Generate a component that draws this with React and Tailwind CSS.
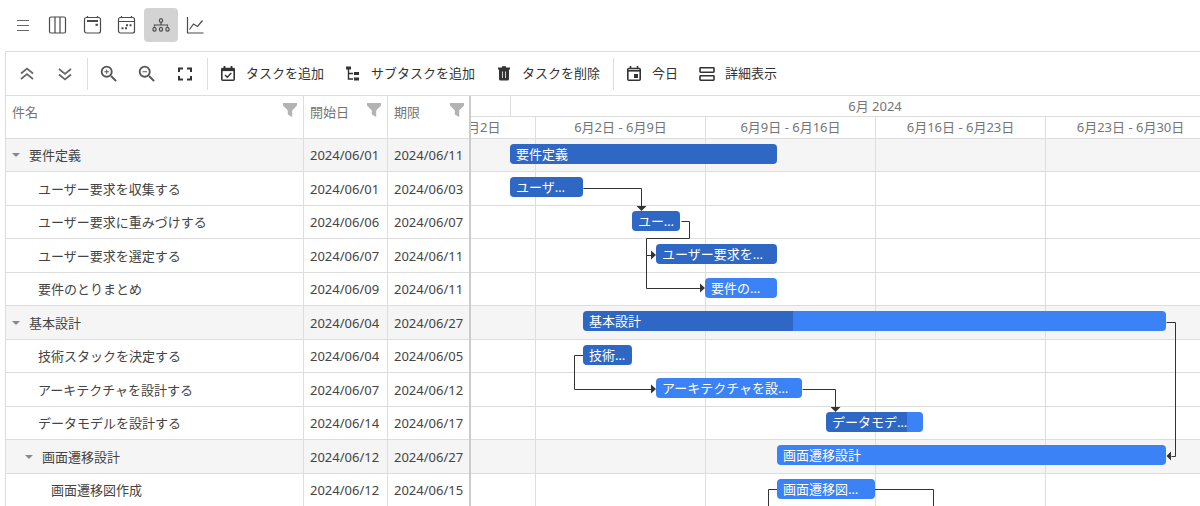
import clsx from 'clsx';
import { MdZoomIn, MdZoomOut } from 'react-icons/md';

const WEEK = 170;
const JUNE_2 = 64;

// x position of the start of a day in June on the timeline
const dayX = (day) => JUNE_2 + Math.floor(((day - 2) * WEEK) / 7);

const TASKS = [
  { title: '要件定義', level: 0, from: 1, to: 11, progress: 100, group: true },
  { title: 'ユーザー要求を収集する', level: 1, from: 1, to: 3, progress: 100 },
  { title: 'ユーザー要求に重みづけする', level: 1, from: 6, to: 7, progress: 100 },
  { title: 'ユーザー要求を選定する', level: 1, from: 7, to: 11, progress: 100 },
  { title: '要件のとりまとめ', level: 1, from: 9, to: 11, progress: 0 },
  { title: '基本設計', level: 0, from: 4, to: 27, progress: 36, group: true },
  { title: '技術スタックを決定する', level: 1, from: 4, to: 5, progress: 100 },
  { title: 'アーキテクチャを設計する', level: 1, from: 7, to: 12, progress: 0 },
  { title: 'データモデルを設計する', level: 1, from: 14, to: 17, progress: 83 },
  { title: '画面遷移設計', level: 1, from: 12, to: 27, progress: 0, group: true },
  { title: '画面遷移図作成', level: 2, from: 12, to: 15, progress: 0 },
];

const WEEKS = [
  '5月26日 - 6月2日',
  '6月2日 - 6月9日',
  '6月9日 - 6月16日',
  '6月16日 - 6月23日',
  '6月23日 - 6月30日',
];

const LINKS = [
  'M112 49H170V68',
  'M210 82H218V99H175V149H229',
  'M175 116H181',
  'M112 216H103V250H181',
  'M331 250H364V268',
  'M695 183H704V317H700',
  'M306 350H297V368',
  'M403 350H462V368',
];

const ARROWS = [
  'M165.5 67h10l-5 5z',
  'M180 111.5v9l5-4.5z',
  'M229 144.5v9l5-4.5z',
  'M180 245.5v9l5-4.5z',
  'M359.5 268h10l-5 5z',
  'M700 312.5v9l-4.5-4.5z',
];

const formatDate = (day) => `2024/06/${String(day).padStart(2, '0')}`;

function LineIcon({ children }) {
  return (
    <svg width="20" height="20" viewBox="0 0 20 20" fill="none" stroke="#4a4a4a" strokeWidth="1.2" aria-hidden="true">
      {children}
    </svg>
  );
}

function ToolIcon({ children }) {
  return (
    <svg width="16" height="16" viewBox="0 0 16 16" fill="none" stroke="#333" strokeWidth="1.6" aria-hidden="true">
      {children}
    </svg>
  );
}

const VIEWS = [
  { label: 'リスト', icon: <path d="M4 5.5h12M4 10.5h12M4 15.5h12" stroke="#666" /> },
  {
    label: 'ボード',
    icon: <><rect x="2.5" y="2" width="16" height="16" rx="1.5" /><path d="M8 2v16M13 2v16" /></>,
  },
  {
    label: 'カレンダー',
    icon: (
      <>
        <rect x="2.5" y="2.5" width="16" height="15.5" rx="2" />
        <path d="M5.5 1v1.5M15.5 1v1.5" />
        <path d="M5 6h11" strokeWidth="2" />
        <path d="M13.5 9.8h2.5" strokeWidth="2" />
      </>
    ),
  },
  {
    label: 'スケジュール',
    icon: (
      <>
        <rect x="2.5" y="2.5" width="16" height="15.5" rx="2" />
        <path d="M5.5 1v2M15.5 1v2M2.5 6.5h16" />
        <path d="M10 10.2h2M13.5 10.2h2M5.5 13.3h2M9 13.3h2" strokeWidth="2" />
      </>
    ),
  },
  {
    label: 'ガント',
    active: true,
    icon: (
      <>
        <ellipse cx="10" cy="5.5" rx="1.6" ry="1.9" />
        <path d="M10 7.4v2.8M3.5 11.6v-1.6h13v1.6" />
        <ellipse cx="3.5" cy="14.2" rx="1.6" ry="1.9" />
        <ellipse cx="10" cy="14.2" rx="1.6" ry="1.9" />
        <ellipse cx="16.5" cy="14.2" rx="1.6" ry="1.9" />
      </>
    ),
  },
  { label: 'チャート', icon: <path d="M2.5 2v16h16M4.5 14.5l4-5.5 4 2.5 5-6" /> },
];

const ICONS = {
  collapse: <path d="M2 7.5L8 2.5l6 5M2 13L8 8l6 5" stroke="#666" strokeWidth="1.7" />,
  expand: <path d="M2 3l6 5 6-5M2 8.5l6 5 6-5" stroke="#666" strokeWidth="1.7" />,
  fit: <path d="M2 6V2.5h4M10 2.5h4V6M14 10v3.5h-4M6 13.5H2V10" strokeWidth="2" />,
  add: (
    <>
      <rect x="1.8" y="2.5" width="12.4" height="11.7" rx="1" />
      <path d="M1.5 3.6h13" strokeWidth="3" />
      <path d="M4.5 0v3M11.5 0v3" strokeWidth="1.8" />
      <path d="M5 9l2.3 2.2L11.3 7" strokeWidth="1.4" />
    </>
  ),
  subtask: (
    <>
      <path d="M1 2h5M9 7.5h5M9 13h5" strokeWidth="3" />
      <path d="M3.5 3v10H8M3.5 7.5H8" strokeWidth="1.4" />
    </>
  ),
  remove: (
    <>
      <path d="M2 2.6h12M6 1.2h4" strokeWidth="2" />
      <path d="M3 3h10v10a1.5 1.5 0 0 1-1.5 1.5h-7A1.5 1.5 0 0 1 3 13z" fill="#333" stroke="none" />
      <path d="M6.5 5.5v6.5M9.5 5.5v6.5" stroke="#ccc" strokeWidth="1" />
    </>
  ),
  today: (
    <>
      <rect x="1.8" y="2.5" width="12.4" height="11.7" rx="1" />
      <path d="M1.8 4.8h12.4" />
      <path d="M4.5 0v3M11.5 0v3" />
      <path d="M8 8h4v4H8z" fill="#333" stroke="none" />
    </>
  ),
  detail: (
    <>
      <rect x="1" y="1.8" width="14" height="4.4" rx="0.6" />
      <rect x="1" y="9.8" width="14" height="4.4" rx="0.6" />
    </>
  ),
};

function IconButton({ label, children }) {
  return (
    <button type="button" aria-label={label} className="flex h-9 w-[38px] items-center justify-center text-[#555]">
      {children}
    </button>
  );
}

function TextButton({ icon, children }) {
  return (
    <button type="button" className="flex h-9 items-center gap-[10px] px-[10px] whitespace-nowrap text-[#333]">
      <ToolIcon>{ICONS[icon]}</ToolIcon>
      {children}
    </button>
  );
}

function Separator() {
  return <div className="mr-[2px] ml-[3px] h-8 w-px bg-[#ddd]" />;
}

function Toolbar() {
  return (
    <div className="flex h-11 shrink-0 items-center border-b border-[#ddd] pl-[2px]">
      <IconButton label="すべて折りたたむ"><ToolIcon>{ICONS.collapse}</ToolIcon></IconButton>
      <IconButton label="すべて展開"><ToolIcon>{ICONS.expand}</ToolIcon></IconButton>
      <Separator />
      <IconButton label="拡大"><MdZoomIn size={22} /></IconButton>
      <IconButton label="縮小"><MdZoomOut size={22} /></IconButton>
      <IconButton label="全体表示"><ToolIcon>{ICONS.fit}</ToolIcon></IconButton>
      <Separator />
      <div className="flex gap-px">
        <TextButton icon="add">タスクを追加</TextButton>
        <TextButton icon="subtask">サブタスクを追加</TextButton>
        <TextButton icon="remove">タスクを削除</TextButton>
      </div>
      <Separator />
      <div className="flex gap-px">
        <TextButton icon="today">今日</TextButton>
        <TextButton icon="detail">詳細表示</TextButton>
      </div>
    </div>
  );
}

function HeaderCell({ className, children }) {
  return (
    <th scope="col" className={clsx('h-[43px] border-b border-[#ddd] pl-[6px] text-left font-normal text-[#757575]', className)}>
      <div className="flex h-8 items-start justify-between">
        <span className="leading-[22px]">{children}</span>
        <button type="button" aria-label={`${children}で絞り込む`} className="pt-[2px]">
          <svg width="14" height="14" viewBox="0 0 14 14" fill="#b3b3b3" aria-hidden="true">
            <path d="M0 0h14v2.5L9.2 7.5V14l-4.4-2.5v-4L0 2.5z" />
          </svg>
        </button>
      </div>
    </th>
  );
}

function TaskTable() {
  return (
    <table className="w-[463px] shrink-0 table-fixed border-separate border-spacing-0 self-start">
      <thead>
        <tr>
          <HeaderCell className="w-[298px] border-r pr-[6px]">件名</HeaderCell>
          <HeaderCell className="w-[84px] border-r pr-[6px]">開始日</HeaderCell>
          <HeaderCell className="pr-[5px]">期限</HeaderCell>
        </tr>
      </thead>
      <tbody>
        {TASKS.map((t) => (
          <tr key={t.title} className={clsx('odd:h-[33px] even:h-[34px]', t.group && 'bg-[#f5f5f5]')}>
            <td className="border-r border-b border-[#ddd] p-0 pl-[6px]">
              <div className="flex items-center leading-5" style={{ paddingLeft: t.level * 13 }}>
                {t.group ? (
                  <button type="button" aria-label="折りたたむ" className="w-[17px]">
                    <svg width="8" height="4" viewBox="0 0 8 4" fill="#888" aria-hidden="true">
                      <path d="M0 0h8L4 4z" />
                    </svg>
                  </button>
                ) : (
                  <span className="w-[13px]" />
                )}
                {t.title}
              </div>
            </td>
            <td className="border-r border-b border-[#ddd] p-0 pl-[6px] leading-5">{formatDate(t.from)}</td>
            <td className="border-b border-[#ddd] p-0 pl-[6px] leading-5">{formatDate(t.to)}</td>
          </tr>
        ))}
      </tbody>
    </table>
  );
}

function Bar({ task }) {
  const start = dayX(task.from);
  const width = dayX(task.to + 1) - start;

  return (
    <div className="relative z-10 h-5 shrink-0 overflow-hidden rounded bg-[#3b82f6]" style={{ marginLeft: start, width }}>
      <div className="absolute inset-y-0 left-0 bg-black/20" style={{ width: `${task.progress}%` }} />
      <div className="relative truncate pr-[5px] pl-[6px] leading-5 text-white">{task.title}</div>
    </div>
  );
}

function Timeline() {
  return (
    <div className="min-w-0 flex-1 self-start overflow-hidden border-l-2 border-[#ccc]">
      <div className="flex h-[21px] border-b border-[#ddd] text-[#757575]">
        <div className="shrink-0" style={{ width: dayX(1) }} />
        <div className="w-[729px] shrink-0 border-l border-[#ddd] text-center leading-5">6月 2024</div>
      </div>
      <div className="-ml-[106px] flex h-[22px] border-b border-[#ddd] text-[#757575]">
        {WEEKS.map((w) => (
          <div key={w} className="w-[170px] shrink-0 border-l border-[#ddd] text-center leading-5">{w}</div>
        ))}
      </div>
      <div className="relative">
        {TASKS.map((t) => (
          <div key={t.title} className={clsx('flex border-b border-[#ddd] pt-[5px] odd:h-[33px] even:h-[34px]', t.group && 'bg-[#f5f5f5]')}>
            <Bar task={t} />
          </div>
        ))}
        <div className="absolute inset-0 -left-[106px] flex">
          {WEEKS.map((w) => (
            <div key={w} className="w-[170px] shrink-0 border-l border-[#ddd]" />
          ))}
        </div>
        <svg className="absolute inset-0 h-full w-full" fill="none" aria-hidden="true">
          <g transform="translate(0.5 0.5)" stroke="#333">
            {LINKS.map((d) => <path key={d} d={d} />)}
          </g>
          <g fill="#333">
            {ARROWS.map((d) => <path key={d} d={d} />)}
          </g>
        </svg>
      </div>
    </div>
  );
}

export default function App() {
  return (
    <div
      lang="ja"
      className="flex h-screen flex-col overflow-hidden bg-white font-['Noto_Sans','Noto_Sans_CJK_JP',sans-serif] text-[13px] text-[#444]"
    >
      <nav className="flex w-[212px] shrink-0 justify-between pt-2 pb-[9px] pl-[6px]">
        {VIEWS.map((v) => (
          <button
            key={v.label}
            type="button"
            aria-label={v.label}
            className={clsx('flex h-[34px] w-[34px] items-center justify-center rounded', v.active && 'bg-[#d3d3d3]')}
          >
            <LineIcon>{v.icon}</LineIcon>
          </button>
        ))}
      </nav>
      <main className="ml-[5px] flex min-h-0 flex-1 flex-col border-t border-l border-[#ddd]">
        <Toolbar />
        <div className="flex min-h-0 flex-1">
          <TaskTable />
          <Timeline />
        </div>
      </main>
    </div>
  );
}
